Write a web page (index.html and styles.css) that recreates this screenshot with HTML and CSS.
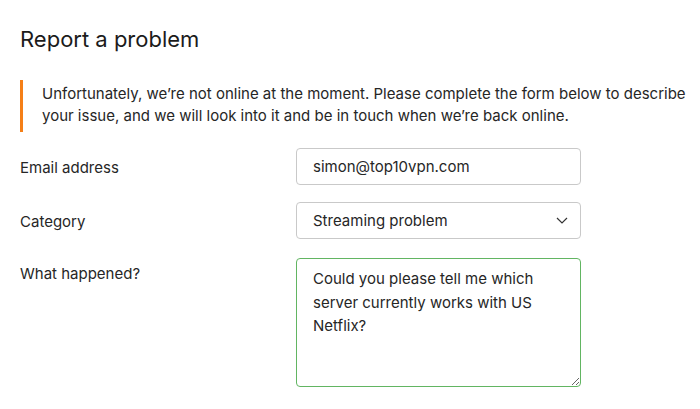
FILE: index.html
```html
<!DOCTYPE html>
<html lang="en">
<head>
    <meta charset="UTF-8">
    <title>Report a problem</title>
    <link rel="stylesheet" href="styles.css">
</head>
<body>
<div class="report">
    <h1 class="report-title">Report a problem</h1>
    <p class="notice">Unfortunately, we’re not online at the moment. Please complete the form below to describe your issue, and we will look into it and be in touch when we’re back online.</p>
    <form class="report-form">
        <label class="field-label" for="email">Email address</label>
        <input class="field" type="text" id="email" value="simon@top10vpn.com">

        <label class="field-label" for="category">Category</label>
        <div class="select-wrap">
            <select class="field select" id="category">
                <option>Streaming problem</option>
                <option>Connection problem</option>
                <option>Other</option>
            </select>
            <svg class="chevron" width="12" height="7" viewBox="0 0 12 7"><path d="M1 1l5 5 5-5" fill="none" stroke="#333" stroke-width="1.2"/></svg>
        </div>

        <label class="field-label label-top" for="what">What happened?</label>
        <textarea class="field textarea" id="what">Could you please tell me which server currently works with US Netflix?</textarea>
    </form>
</div>
</body>
</html>
```

FILE: styles.css
```css
body {
    margin: 0;
    font-family: Inter, "Noto Sans", sans-serif;
    color: #262626;
    background: #fff;
}

.report {
    padding: 20px;
}

.report-title {
    margin: 5px 0 0;
    font-size: 22px;
    font-weight: 400;
    line-height: 29px;
    color: #1b1b1b;
}

.notice {
    margin: 26px 0 0;
    padding: 3px 0 5px 19px;
    border-left: 3px solid #f57f17;
    font-size: 15px;
    line-height: 22px;
    width: 650px;
}

.report-form {
    display: grid;
    grid-template-columns: 276px 285px;
    row-gap: 17px;
    margin-top: 16px;
}

.field-label {
    font-size: 15px;
    line-height: 22px;
    padding-top: 9px;
}

.label-top {
    padding-top: 5px;
    margin-top: 2px;
}

.field {
    box-sizing: border-box;
    width: 285px;
    height: 37px;
    margin: 0;
    padding: 0 16px;
    border: 1px solid #c9c9c9;
    border-radius: 4px;
    font-family: inherit;
    font-size: 15px;
    color: #262626;
    background: #fff;
    outline: none;
}

.select-wrap {
    position: relative;
}

.select {
    appearance: none;
    -webkit-appearance: none;
}

.chevron {
    position: absolute;
    right: 13px;
    top: 15px;
    pointer-events: none;
}

.textarea {
    height: 129px;
    margin-top: 2px;
    padding: 8px 16px;
    line-height: 23.5px;
    border-color: #62b562;
    resize: vertical;
}
```
